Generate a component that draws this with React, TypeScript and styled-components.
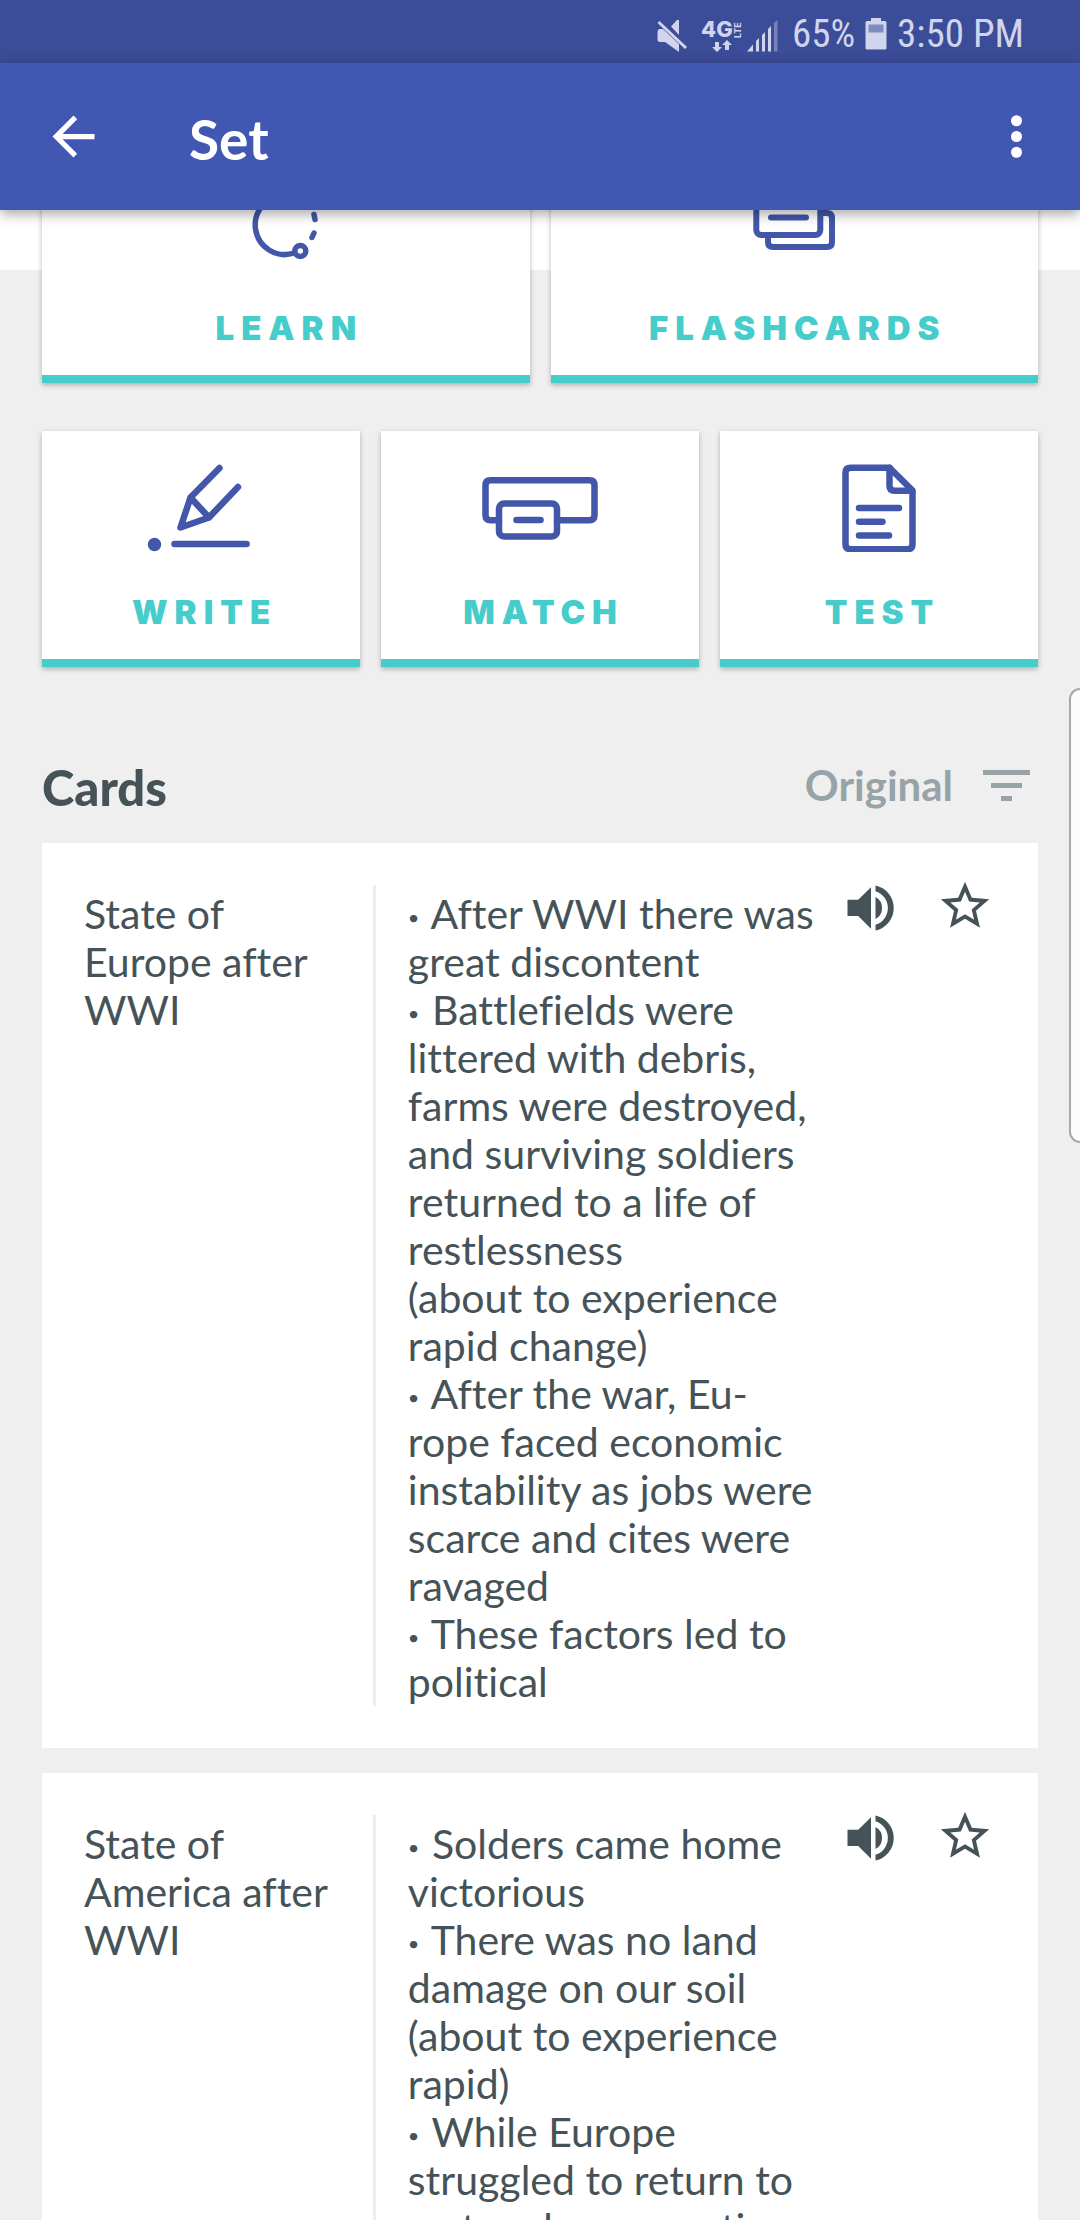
import React from "react";
import styled, { createGlobalStyle } from "styled-components";

const color = {
  status: "#3b4c98",
  bar: "#4257b2",
  ink: "#455358",
  muted: "#98a3a8",
  teal: "#45cccb",
  icon: "#4257a9",
  page: "#efefef",
  statusInk: "#d0d4ec",
};

const GlobalStyle = createGlobalStyle`
  *, *::before, *::after { box-sizing: border-box; }
  body { margin: 0; background: ${color.page}; }
  button { font: inherit; color: inherit; background: none; border: 0; padding: 0; cursor: pointer; }
  svg { display: block; }
`;

const Screen = styled.div`
  display: flex;
  flex-direction: column;
  height: 100vh;
  overflow: hidden;
  color: ${color.ink};
  font-family: Lato, "Open Sans", sans-serif;
  font-variant-ligatures: none;
`;

const StatusBar = styled.div`
  display: flex;
  flex: none;
  align-items: center;
  justify-content: flex-end;
  height: 63px;
  padding: 4px 56px 0 0;
  background: ${color.status};
  color: ${color.statusInk};
  font-family: "Roboto Condensed", Roboto, sans-serif;
  font-size: 39px;
  line-height: 48px;
`;

const StatusIcons = styled.svg`
  width: 128px;
  height: 44px;
  margin-right: 10px;
`;

const Battery = styled.svg`
  width: 22px;
  height: 34px;
  margin: 0 10px;
`;

const AppBar = styled.header`
  position: relative;
  z-index: 1;
  display: flex;
  flex: none;
  align-items: center;
  height: 147px;
  padding: 0 32px 0 42px;
  background: ${color.bar};
  color: #fff;
  box-shadow: 0 4px 12px rgba(0, 0, 0, 0.35);
`;

const BarButton = styled.button`
  width: 63px;
  height: 63px;
  svg { width: 63px; height: 63px; fill: currentColor; }
`;

const Title = styled.h1`
  flex: 1;
  margin: 0;
  padding: 4px 0 0 84px;
  font-size: 55px;
  line-height: 64px;
  font-weight: 700;
`;

const Main = styled.main`
  flex: 1;
  min-height: 0;
  overflow-y: auto;
  scrollbar-width: none;
`;

/* The list is scrolled a little, so its first row sits partly under the app bar. */
const Content = styled.div`
  margin-top: -63px;
  padding: 0 42px 42px;
  background: linear-gradient(#fff 123px, ${color.page} 123px);
`;

const ModeRow = styled.div`
  display: flex;
  gap: 21px;
  margin-bottom: 48px;
`;

const ModeCard = styled.button`
  display: flex;
  flex: 1 1 0;
  flex-direction: column;
  align-items: center;
  min-width: 0;
  height: 236px;
  padding-top: 33px;
  background: #fff;
  border-bottom: 8px solid ${color.teal};
  box-shadow: 0 2px 5px rgba(0, 0, 0, 0.28);
`;

const ModeIcon = styled.svg<{ $stroke?: number }>`
  width: 120px;
  height: 88px;
  fill: none;
  stroke: ${color.icon};
  stroke-width: ${(p) => p.$stroke ?? 6.5};
  stroke-linecap: round;
  stroke-linejoin: round;
`;

const ModeLabel = styled.span`
  margin-top: 40px;
  padding-left: 7px;
  color: ${color.teal};
  font-family: Inter, Lato, sans-serif;
  font-size: 33px;
  line-height: 40px;
  font-weight: 900;
  letter-spacing: 7px;
`;

const ListHeader = styled.div`
  display: flex;
  align-items: center;
  justify-content: space-between;
  padding: 40px 8px 28px 0;
`;

const ListTitle = styled.h2`
  margin: 0;
  padding-top: 4px;
  font-size: 49px;
  line-height: 56px;
  font-weight: 900;
`;

const SortButton = styled.button`
  display: flex;
  align-items: center;
  gap: 30px;
  color: ${color.muted};
  font-size: 42px;
  line-height: 48px;
  font-weight: 700;
  svg { width: 47px; height: 31px; fill: currentColor; }
`;

const CardList = styled.ul`
  display: flex;
  flex-direction: column;
  gap: 25px;
  margin: 0;
  padding: 0;
  list-style: none;
`;

const Card = styled.li`
  display: grid;
  grid-template-columns: minmax(0, 5fr) 3px minmax(0, 8fr) auto;
  padding: 42px;
  background: #fff;
`;

const CardText = styled.div<{ $inset?: boolean }>`
  padding-top: 5px;
  padding-left: ${(p) => (p.$inset ? "32px" : "0")};
  font-size: 41px;
  line-height: 48px;
`;

const Line = styled.div`
  min-height: 48px;
`;

const Bullet = styled.span`
  margin-right: 2px;
  font-size: 20px;
  line-height: 20px;
  vertical-align: 4px;
`;

const Divider = styled.div`
  background: #eeeeee;
`;

const Actions = styled.div`
  display: flex;
  align-items: flex-start;
  gap: 32px;
  margin-top: -11px;
`;

const ActionButton = styled.button`
  display: flex;
  align-items: center;
  justify-content: center;
  width: 63px;
  height: 63px;
  svg { width: 58px; height: 58px; fill: currentColor; }
`;

const EdgeHandle = styled.div`
  position: fixed;
  z-index: 2;
  top: 688px;
  right: 0;
  width: 11px;
  height: 455px;
  background: #fcfcfc;
  border: 2px solid #a9a9a9;
  border-right: 0;
  border-radius: 14px 0 0 14px;
`;

const LearnIcon = () => (
  <ModeIcon viewBox="226 180 120 88" aria-hidden="true" $stroke={5.5}>
    <path d="M294 253A29.500 29.500 0 1 1 284.500 195.500" />
    <path d="M314 214.500l1 5M314 233l-2 4.500" />
    <circle cx="300.300" cy="251" r="5.500" fill="#fff" />
  </ModeIcon>
);

const FlashcardsIcon = () => (
  <ModeIcon viewBox="734 180 120 88" aria-hidden="true" $stroke={6}>
    <rect x="756.300" y="193" width="64" height="42" rx="5" />
    <path d="M771 217.500h35" />
    <path d="M821 213h6q5 0 5 5v24q0 5-5 5h-54q-5 0-5-5v-6" />
  </ModeIcon>
);

const WriteIcon = () => (
  <ModeIcon viewBox="141 464 120 88" aria-hidden="true">
    <path d="M219.500 468L190.500 497.500L180.500 527.500L209 517.500L238 487M190.500 497.500L209 517.500" />
    <path d="M174.500 544h72" />
    <circle cx="154.500" cy="544.500" r="6.700" fill={color.icon} stroke="none" />
  </ModeIcon>
);

const MatchIcon = () => (
  <ModeIcon viewBox="480 464 120 88" aria-hidden="true">
    <path d="M499 520.300h-8.500q-5 0-5-5v-30q0-5 5-5h99q5 0 5 5v30q0 5-5 5H557" />
    <rect x="499" y="503.500" width="58" height="33" rx="5" />
    <path d="M516.500 520h24" />
  </ModeIcon>
);

const TestIcon = () => (
  <ModeIcon viewBox="819 464 120 88" aria-hidden="true">
    <path d="M889.500 467.700h-39q-5 0-5 5v71.500q0 5 5 5h57q5 0 5-5V490.500z" />
    <path d="M889.500 467.700v18q0 5 5 5h17.500" />
    <path d="M859 508h40M859 521.700h23.500M859 535.500h30" />
  </ModeIcon>
);

const SpeakerIcon = () => (
  <svg viewBox="840 877.500 58 58" aria-hidden="true">
    <path d="M846.500 900.300h10.700L870 887.800v41.400L857.200 916.500h-10.700z" />
    <path d="M874.500 886a23 23 0 0 1 0 45v-5.700a17.600 17.600 0 0 0 0-33.600z" />
    <path d="M874.500 897.500q6.500 3.500 6.500 11t-6.500 11z" />
  </svg>
);

const StarIcon = () => (
  <svg viewBox="0 0 24 24" aria-hidden="true">
    <path d="M22 9.240l-7.190-.620L12 2 9.190 8.630 2 9.240l5.460 4.730L5.820 21 12 17.270 18.180 21l-1.630-7.030L22 9.240zM12 15.400l-3.760 2.270 1-4.280-3.320-2.880 4.380-.380L12 6.100l1.710 4.040 4.380.380-3.320 2.880 1 4.280L12 15.400z" />
  </svg>
);

const SystemIcons = () => (
  <StatusIcons viewBox="654 8 128 44" fill={color.statusInk} role="img" aria-label="Muted, 4G LTE">
    <path d="M660 25h3l16 15v8l-14-10h-5q-2.500 0-2.500-2.500v-7.500q0-3 2.500-3zM671 22.500l6-6.500h2v15z" />
    <path d="M658.500 18l27.500 26" stroke={color.statusInk} strokeWidth="3" />
    <text x="701" y="33" fontFamily="Inter, sans-serif" fontWeight="800" fontSize="22">4G</text>
    <text transform="translate(741 34) rotate(-90)" fontFamily="Inter, sans-serif" fontWeight="700" fontSize="9">LTE</text>
    <path d="M715 38h4v5h3l-5 5-5-5h3zM725 46h4v-5h3l-5-5-5 5h3z" />
    <path d="M747 47.500l6-7v7zM756 37l3-3v13.500h-3zM762 31l3-3v19.500h-3zM768 25l3-3v25.500h-3z" />
    <path d="M774 19l3.500-3v31.500h-3.500z" opacity=".4" />
  </StatusIcons>
);

const rows = [
  [
    { label: "LEARN", Icon: LearnIcon },
    { label: "FLASHCARDS", Icon: FlashcardsIcon },
  ],
  [
    { label: "WRITE", Icon: WriteIcon },
    { label: "MATCH", Icon: MatchIcon },
    { label: "TEST", Icon: TestIcon },
  ],
];

const cards = [
  {
    term: ["State of", "Europe after", "WWI"],
    definition: [
      "• After WWI there was",
      "great discontent",
      "• Battlefields were",
      "littered with debris,",
      "farms were destroyed,",
      "and surviving soldiers",
      "returned to a life of",
      "restlessness",
      "(about to experience",
      "rapid change)",
      "• After the war, Eu-",
      "rope faced economic",
      "instability as jobs were",
      "scarce and cites were",
      "ravaged",
      "• These factors led to",
      "political",
    ],
  },
  {
    term: ["State of", "America after", "WWI"],
    definition: [
      "• Solders came home",
      "victorious",
      "• There was no land",
      "damage on our soil",
      "(about to experience",
      "rapid)",
      "• While Europe",
      "struggled to return to",
      "rest and recuperation",
    ],
  },
];

const TextLine = ({ text }: { text: string }) =>
  text.startsWith("•") ? (
    <Line>
      <Bullet>•</Bullet>
      {text.slice(1)}
    </Line>
  ) : (
    <Line>{text}</Line>
  );

export default function App() {
  return (
    <Screen>
      <GlobalStyle />
      <StatusBar>
        <SystemIcons />
        <span>65%</span>
        <Battery viewBox="0 0 22 34" fill={color.statusInk} aria-hidden="true">
          <path d="M6 1h10v3h4q1.500 0 1.500 1.500V31q0 1.500-1.500 1.500H2Q.500 32.500.500 31V5.500Q.500 4 2 4h4z" />
          <path d="M3.500 7.500h15v8h-15z" fill="#7f8bc0" />
        </Battery>
        <span>3:50 PM</span>
      </StatusBar>
      <AppBar>
        <BarButton aria-label="Back">
          <svg viewBox="0 0 24 24" aria-hidden="true">
            <path d="M20 11H7.830l5.590-5.590L12 4l-8 8 8 8 1.410-1.410L7.830 13H20v-2z" />
          </svg>
        </BarButton>
        <Title>Set</Title>
        <BarButton aria-label="More options">
          <svg viewBox="0 0 24 24" aria-hidden="true">
            <circle cx="12" cy="6" r="2.100" />
            <circle cx="12" cy="12" r="2.100" />
            <circle cx="12" cy="18" r="2.100" />
          </svg>
        </BarButton>
      </AppBar>
      <Main>
        <Content>
          {rows.map((row, i) => (
            <ModeRow key={i}>
              {row.map(({ label, Icon }) => (
                <ModeCard key={label}>
                  <Icon />
                  <ModeLabel>{label}</ModeLabel>
                </ModeCard>
              ))}
            </ModeRow>
          ))}
          <ListHeader>
            <ListTitle>Cards</ListTitle>
            <SortButton>
              Original
              <svg viewBox="0 0 47 31" aria-hidden="true">
                <path d="M0 0h47v5H0zM8 13h31v5H8zM18 26h11v5H18z" />
              </svg>
            </SortButton>
          </ListHeader>
          <CardList>
            {cards.map((card) => (
              <Card key={card.term.join(" ")}>
                <CardText>
                  {card.term.map((text) => <TextLine key={text} text={text} />)}
                </CardText>
                <Divider />
                <CardText $inset>
                  {card.definition.map((text) => <TextLine key={text} text={text} />)}
                </CardText>
                <Actions>
                  <ActionButton aria-label="Play audio"><SpeakerIcon /></ActionButton>
                  <ActionButton aria-label="Star card"><StarIcon /></ActionButton>
                </Actions>
              </Card>
            ))}
          </CardList>
        </Content>
      </Main>
      <EdgeHandle />
    </Screen>
  );
}
